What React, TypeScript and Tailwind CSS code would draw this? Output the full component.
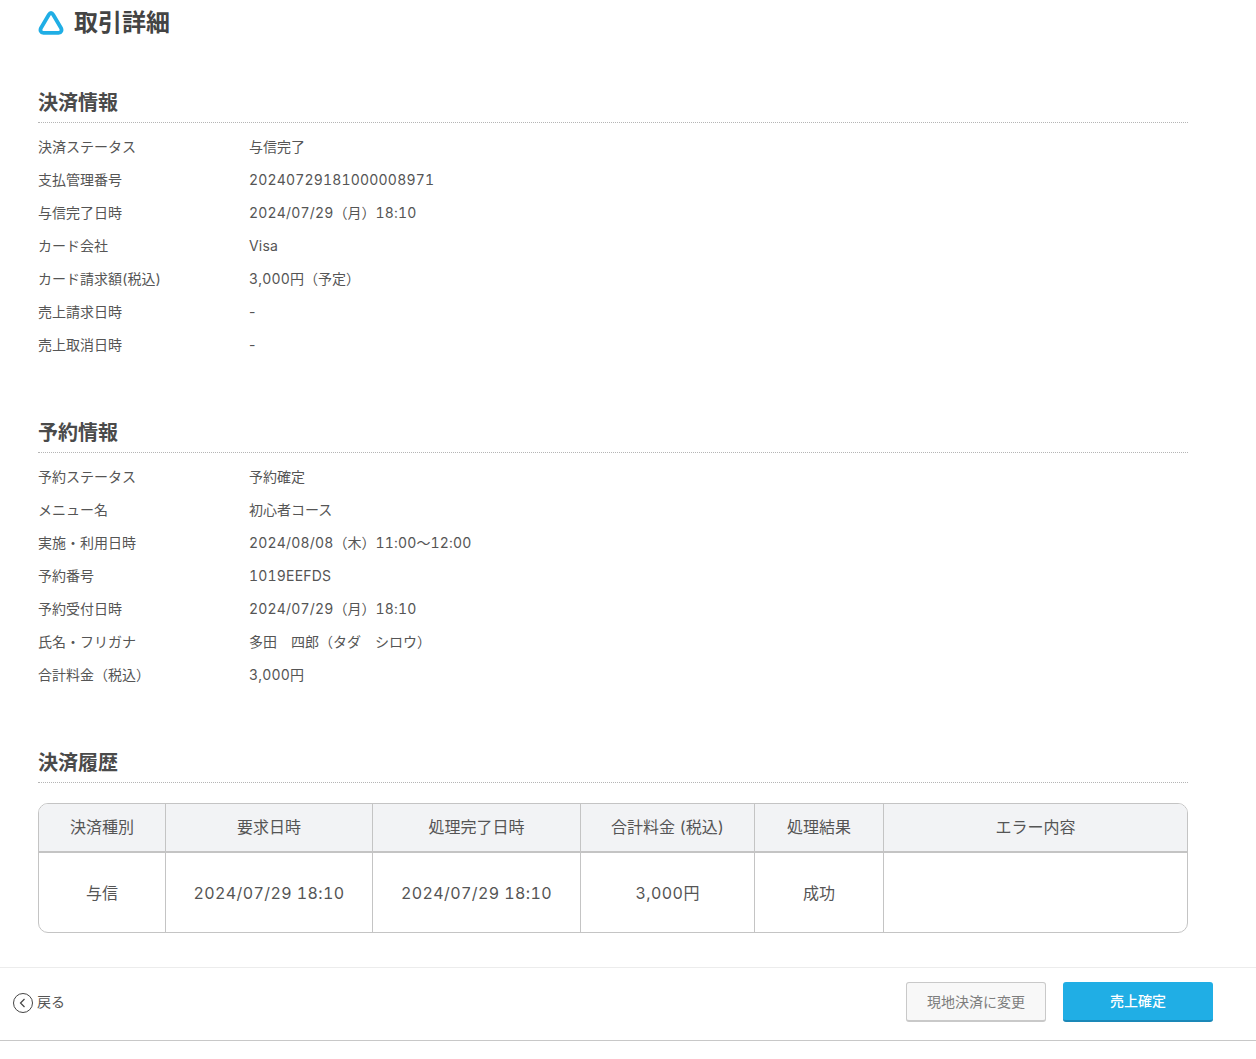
const font = "font-['Inter','Noto_Sans_CJK_JP',sans-serif] tabular-nums";

type Row = [string, string];

const payment: Row[] = [
  ["決済ステータス", "与信完了"],
  ["支払管理番号", "20240729181000008971"],
  ["与信完了日時", "2024/07/29（月）18:10"],
  ["カード会社", "Visa"],
  ["カード請求額(税込)", "3,000円（予定）"],
  ["売上請求日時", "-"],
  ["売上取消日時", "-"],
];

const reservation: Row[] = [
  ["予約ステータス", "予約確定"],
  ["メニュー名", "初心者コース"],
  ["実施・利用日時", "2024/08/08（木）11:00〜12:00"],
  ["予約番号", "1019EEFDS"],
  ["予約受付日時", "2024/07/29（月）18:10"],
  ["氏名・フリガナ", "多田　四郎（タダ　シロウ）"],
  ["合計料金（税込）", "3,000円"],
];

function Value({ text, spacing }: { text: string; spacing: string }) {
  return (
    <>
      {text.split(/([\x20-\x7e]+)/).map((part, i) =>
        i % 2 === 1 ? (
          <span key={i} className={spacing}>
            {part}
          </span>
        ) : (
          part
        ),
      )}
    </>
  );
}

function Heading({ children }: { children: string }) {
  return (
    <h2 className="h-[33px] border-b border-dotted border-[#b5b5b5] text-[20px] leading-[27px] font-bold text-[#4a4a4a]">
      {children}
    </h2>
  );
}

function InfoList({ rows }: { rows: Row[] }) {
  return (
    <dl className="mt-[7px] flex flex-col">
      {rows.map(([k, v]) => (
        <div key={k} className="flex h-[33px] items-center text-[14px] text-[#555]">
          <dt className="w-[211px] shrink-0">{k}</dt>
          <dd className={v === "-" ? "normal-nums" : ""}>
            <Value text={v} spacing="tracking-[0.18px]" />
          </dd>
        </div>
      ))}
    </dl>
  );
}

const columns = [
  { w: "w-[127px]", h: "決済種別", v: "与信" },
  { w: "w-[207px]", h: "要求日時", v: "2024/07/29 18:10" },
  { w: "w-[208px]", h: "処理完了日時", v: "2024/07/29 18:10" },
  { w: "w-[174px]", h: "合計料金 (税込)", v: "3,000円" },
  { w: "w-[129px]", h: "処理結果", v: "成功" },
  { w: "flex-1", h: "エラー内容", v: "" },
];

export default function App() {
  return (
    <div className={`${font} relative h-[1059px] w-[1256px] overflow-hidden bg-white text-[#555]`}>
      <div className="pl-[38px] pr-[68px]">
        <header className="flex h-[45px] items-center gap-[10px]">
          <svg width="26" height="24" viewBox="0 0 26 24" fill="none" aria-hidden="true">
            <path
              d="M13 2 C12 2 11.4 2.7 10.8 3.7 L3 17 C1.8 19.3 2.7 21.8 5.4 21.8 L20.6 21.8 C23.3 21.8 24.2 19.3 23 17 L15.2 3.7 C14.6 2.7 14 2 13 2 Z"
              stroke="#20aee5"
              strokeWidth="3.8"
              strokeLinejoin="round"
            />
          </svg>
          <h1 className="text-[24px] leading-[32px] font-bold text-[#444]">取引詳細</h1>
        </header>

        <section className="mt-[45px]">
          <Heading>決済情報</Heading>
          <InfoList rows={payment} />
        </section>

        <section className="mt-[59px]">
          <Heading>予約情報</Heading>
          <InfoList rows={reservation} />
        </section>

        <section className="mt-[59px]">
          <Heading>決済履歴</Heading>
          <div className="mt-5 h-[130px] overflow-hidden rounded-[10px] border border-[#c4c4c4]">
            <div className="flex h-[49px] border-b-2 border-[#c4c4c4] bg-[#f2f3f5] text-[16px] text-[#555]">
              {columns.map((c, i) => (
                <div
                  key={c.h}
                  className={`${c.w} flex items-center justify-center pb-[2px] ${i < 5 ? "border-r border-[#c4c4c4]" : ""}`}
                >
                  {c.h}
                </div>
              ))}
            </div>
            <div className="flex h-[79px] text-[16px] text-[#555]">
              {columns.map((c, i) => (
                <div
                  key={c.h}
                  className={`${c.w} flex items-center justify-center ${i < 5 ? "border-r border-[#c4c4c4]" : ""}`}
                >
                  <span>
                    <Value text={c.v} spacing="tracking-[0.4px]" />
                  </span>
                </div>
              ))}
            </div>
          </div>
        </section>
      </div>

      <footer className="mt-[34px] flex h-[74px] items-center justify-between border-y border-t-[#ececec] border-b-[#c8c8c8] pb-[4px] pl-[13px] pr-[43px]">
        <div className="flex items-center gap-[4px] text-[14px] text-[#555]">
          <svg className="mt-[2px]" width="20" height="20" viewBox="0 0 20 20" fill="none" aria-hidden="true">
            <circle cx="10" cy="10" r="9.5" stroke="#444" />
            <path d="M11.5 6 L7.5 10 L11.5 14" stroke="#444" strokeWidth="1.2" />
          </svg>
          <span className="mb-[2px]">戻る</span>
        </div>
        <div className="flex gap-[17px]">
          <button className="h-10 w-[140px] rounded-[3px] border border-b-2 border-[#c9c9c9] bg-[#f8f8f8] pb-[1px] text-[14px] text-[#7d7d7d]">
            現地決済に変更
          </button>
          <button className="h-10 w-[150px] rounded-[3px] border-b-2 border-[#1a88b8] bg-[#20aee5] pb-[1px] text-[14px] font-medium text-white">
            売上確定
          </button>
        </div>
      </footer>
    </div>
  );
}
